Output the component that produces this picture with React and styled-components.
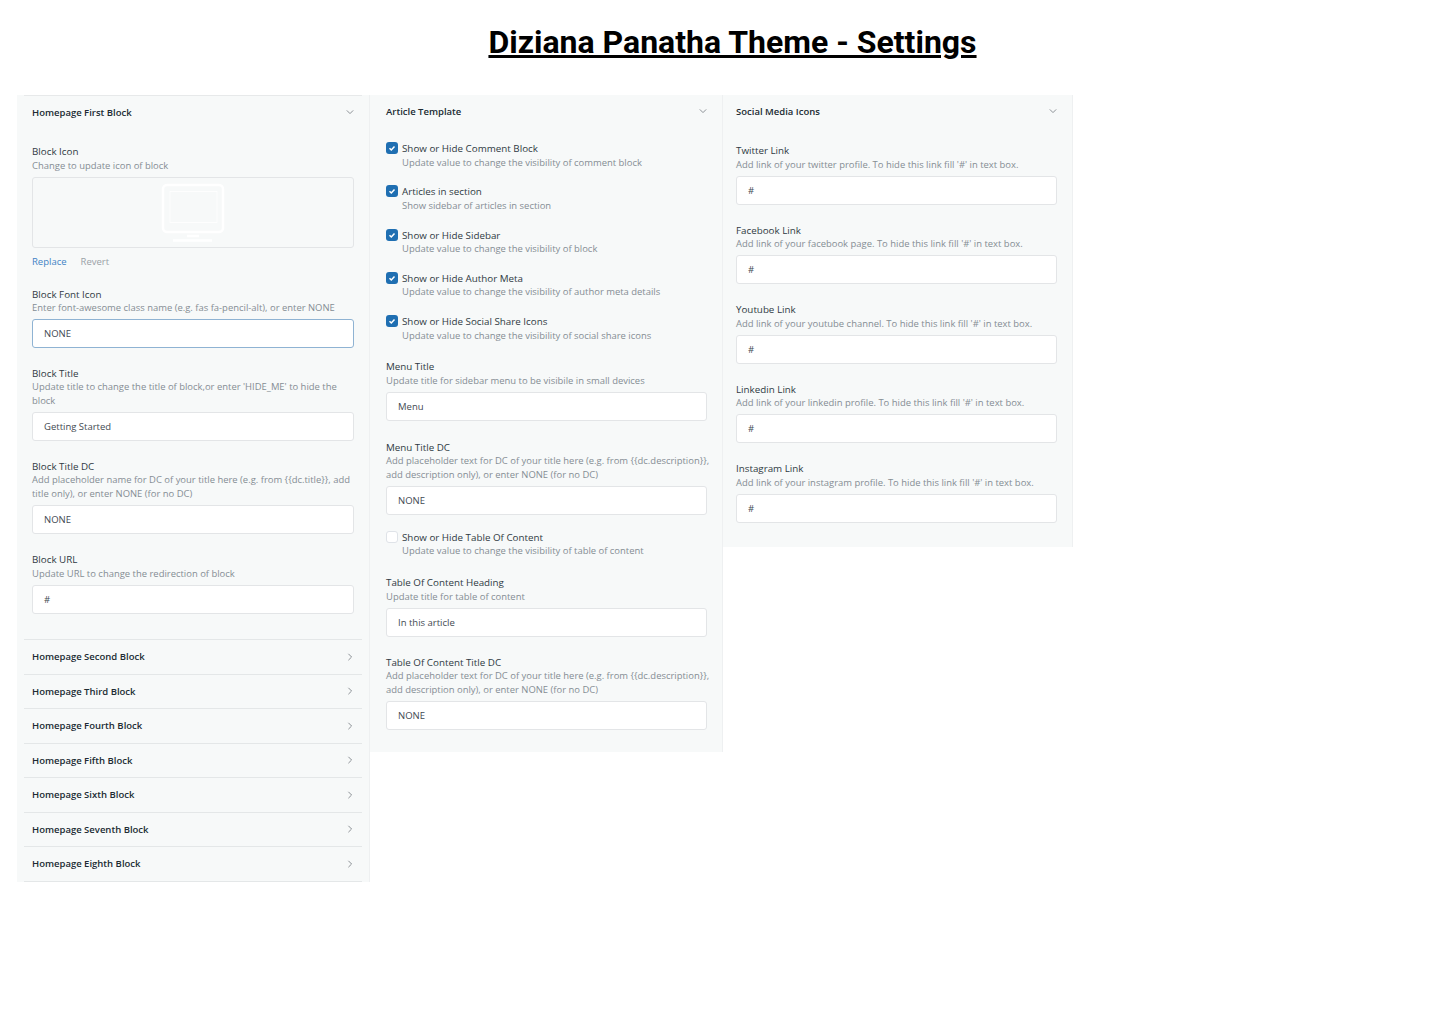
import React from "react";
import styled, { createGlobalStyle } from "styled-components";

const GlobalStyle = createGlobalStyle`
  body {
    margin: 0;
    background: #fff;
    font-family: "Open Sans", "Noto Sans", sans-serif;
  }
`;

const Page = styled.div`
  width: 1440px;
  height: 1024px;
  overflow: hidden;
  padding: 23px 0 0 17px;
  box-sizing: border-box;
`;
const Title = styled.h1`
  margin: 0 0 34px;
  padding-left: 31px;
  width: 1369px;
  text-align: center;
  font-family: Roboto, sans-serif;
  font-size: 32px;
  font-weight: 700;
  line-height: 38px;
  color: #000;
  text-decoration: underline;
`;
const Columns = styled.div`
  display: flex;
  align-items: flex-start;
`;
const Column = styled.section`
  box-sizing: border-box;
  width: ${(p) => p.$width}px;
  padding: ${(p) => p.$padding};
  background: #f7f9f9;
  border-right: 1px solid #eef0f1;
`;
const Header = styled.div`
  display: flex;
  align-items: center;
  justify-content: space-between;
  height: 32px;
  padding: ${(p) => p.$padding};
  border-top: ${(p) => (p.$ruled ? "1px solid #e7e9ea" : "none")};
  font-size: 9.5px;
  font-weight: 600;
  color: #202b33;
`;
const Row = styled(Header)`
  height: 34.5px;
  padding: 0 8px;
  box-sizing: border-box;
  border-bottom: 1px solid #e4e7e8;
  border-top: none;
`;
const Chevron = styled.svg`
  width: 8px;
  height: 8px;
  fill: none;
  stroke: #8c9196;
  stroke-width: 1;
`;
const Field = styled.div`
  margin-bottom: ${(p) => p.$gap}px;
`;
const Label = styled.div`
  font-size: 9.8px;
  line-height: 15px;
  margin-bottom: -0.5px;
  font-weight: 500;
  color: #2f3a43;
`;
const Desc = styled.div`
  font-size: 9.45px;
  line-height: 13.5px;
  margin-right: -4px;
  color: #858d94;
`;
const Input = styled.div`
  box-sizing: border-box;
  display: flex;
  align-items: center;
  height: 29px;
  margin-top: 4.5px;
  padding: 0 11px;
  background: #fff;
  border: 1px solid ${(p) => (p.$active ? "#8fb3d3" : "#e3e5e7")};
  border-radius: 3px;
  font-size: 9.5px;
  color: #3f4a52;
`;
const IconBox = styled.div`
  box-sizing: border-box;
  display: flex;
  align-items: center;
  justify-content: center;
  height: 71px;
  margin-top: 5px;
  border: 1px solid #e3e5e7;
  border-radius: 3px;
`;
const Monitor = styled.svg`
  width: 64px;
  height: 62px;
  fill: none;
  stroke: #fff;
`;
const Actions = styled.div`
  display: flex;
  gap: 14px;
  margin-top: 6.5px;
  font-size: 9.5px;
  line-height: 14px;
`;
const Action = styled.span`
  color: ${(p) => (p.$primary ? "#3f83c5" : "#9aa1a7")};
`;
const CheckRow = styled.div`
  display: flex;
  gap: 4px;
  margin-bottom: ${(p) => p.$gap}px;
`;
const Box = styled.div`
  box-sizing: border-box;
  flex: none;
  display: flex;
  align-items: center;
  justify-content: center;
  width: 12px;
  height: 12px;
  margin: 1px 0 0;
  border-radius: 3px;
  background: ${(p) => (p.$checked ? "#1f6fb2" : "#fff")};
  border: ${(p) => (p.$checked ? "none" : "1px solid #dfe3e8")};
`;
const Tick = styled.svg`
  width: 8px;
  height: 8px;
  fill: none;
  stroke: #fff;
  stroke-width: 1.5;
`;
const Stack = styled.div`
  padding: ${(p) => p.$padding};
`;
const Rule = styled.div`
  border-top: 1px solid #e4e7e8;
`;

const ChevronDown = () => (
  <Chevron viewBox="0 0 8 8">
    <path d="M.8 2.4 4 5.6l3.2-3.2" />
  </Chevron>
);
const ChevronRight = () => (
  <Chevron viewBox="0 0 8 8">
    <path d="M2.4.8 5.6 4 2.4 7.2" />
  </Chevron>
);

const FormField = ({ label, desc, value, active, gap = 18 }) => (
  <Field $gap={gap}>
    <Label>{label}</Label>
    <Desc>{desc}</Desc>
    <Input $active={active}>{value}</Input>
  </Field>
);

const Check = ({ label, desc, checked = true, gap = 15.25 }) => (
  <CheckRow $gap={gap}>
    <Box $checked={checked}>
      {checked && (
        <Tick viewBox="0 0 8 8">
          <path d="M1.5 4.2 3.3 6l3.2-3.6" />
        </Tick>
      )}
    </Box>
    <div>
      <Label>{label}</Label>
      <Desc>{desc}</Desc>
    </div>
  </CheckRow>
);

const homepageRows = ["Second", "Third", "Fourth", "Fifth", "Sixth", "Seventh", "Eighth"];
const socialLinks = [
  ["Twitter Link", "Add link of your twitter profile. To hide this link fill '#' in text box."],
  ["Facebook Link", "Add link of your facebook page. To hide this link fill '#' in text box."],
  ["Youtube Link", "Add link of your youtube channel. To hide this link fill '#' in text box."],
  ["Linkedin Link", "Add link of your linkedin profile. To hide this link fill '#' in text box."],
  ["Instagram Link", "Add link of your instagram profile. To hide this link fill '#' in text box."],
];

const App = () => {
  return (
    <Page>
      <GlobalStyle />
      <Title>Diziana Panatha Theme - Settings</Title>
      <Columns>
        <Column $width={353} $padding="0 7px">
          <Header $ruled $padding="0 8px">
            Homepage First Block
            <ChevronDown />
          </Header>
          <Stack $padding="16px 8px 25.5px">
            <Field $gap={18}>
              <Label>Block Icon</Label>
              <Desc>Change to update icon of block</Desc>
              <IconBox>
                <Monitor viewBox="0 0 64 62">
                  <rect x="2" y="3" width="60" height="47" rx="4" strokeWidth="2.5" />
                  <rect x="9" y="9.5" width="47" height="31" strokeWidth="0.8" />
                  <path d="M26 54h12M12 58.5h39" strokeWidth="2.5" />
                </Monitor>
              </IconBox>
              <Actions>
                <Action $primary>Replace</Action>
                <Action>Revert</Action>
              </Actions>
            </Field>
            <FormField
              label="Block Font Icon"
              desc="Enter font-awesome class name (e.g. fas fa-pencil-alt), or enter NONE"
              value="NONE"
              active
              gap={17.5}
            />
            <FormField
              label="Block Title"
              desc="Update title to change the title of block,or enter 'HIDE_ME' to hide the block"
              value="Getting Started"
            />
            <FormField
              label="Block Title DC"
              desc="Add placeholder name for DC of your title here (e.g. from {{dc.title}}, add title only), or enter NONE (for no DC)"
              value="NONE"
              gap={18.5}
            />
            <FormField
              label="Block URL"
              desc="Update URL to change the redirection of block"
              value="#"
              gap={0}
            />
          </Stack>
          <Rule />
          {homepageRows.map((name) => (
            <Row key={name}>
              Homepage {name} Block
              <ChevronRight />
            </Row>
          ))}
        </Column>

        <Column $width={353} $padding="0 15px 22.5px 16px">
          <Header $padding="0">
            Article Template
            <ChevronDown />
          </Header>
          <Stack $padding="14px 0 0">
            <Check label="Show or Hide Comment Block" desc="Update value to change the visibility of comment block" />
            <Check label="Articles in section" desc="Show sidebar of articles in section" />
            <Check label="Show or Hide Sidebar" desc="Update value to change the visibility of block" />
            <Check label="Show or Hide Author Meta" desc="Update value to change the visibility of author meta details" />
            <Check label="Show or Hide Social Share Icons" desc="Update value to change the visibility of social share icons" gap={17} />
            <FormField
              label="Menu Title"
              desc="Update title for sidebar menu to be visibile in small devices"
              value="Menu"
              gap={19}
            />
            <FormField
              label="Menu Title DC"
              desc="Add placeholder text for DC of your title here (e.g. from {{dc.description}}, add description only), or enter NONE (for no DC)"
              value="NONE"
              gap={15}
            />
            <Check
              label="Show or Hide Table Of Content"
              desc="Update value to change the visibility of table of content"
              checked={false}
              gap={17.5}
            />
            <FormField label="Table Of Content Heading" desc="Update title for table of content" value="In this article" />
            <FormField
              label="Table Of Content Title DC"
              desc="Add placeholder text for DC of your title here (e.g. from {{dc.description}}, add description only), or enter NONE (for no DC)"
              value="NONE"
              gap={0}
            />
          </Stack>
        </Column>

        <Column $width={350} $padding="0 15px 24.5px 13px">
          <Header $padding="0">
            Social Media Icons
            <ChevronDown />
          </Header>
          <Stack $padding="16px 0 0">
            {socialLinks.map(([label, desc], i) => (
              <FormField key={label} label={label} desc={desc} value="#" gap={i === 4 ? 0 : 18} />
            ))}
          </Stack>
        </Column>
      </Columns>
    </Page>
  );
};

export default App;
